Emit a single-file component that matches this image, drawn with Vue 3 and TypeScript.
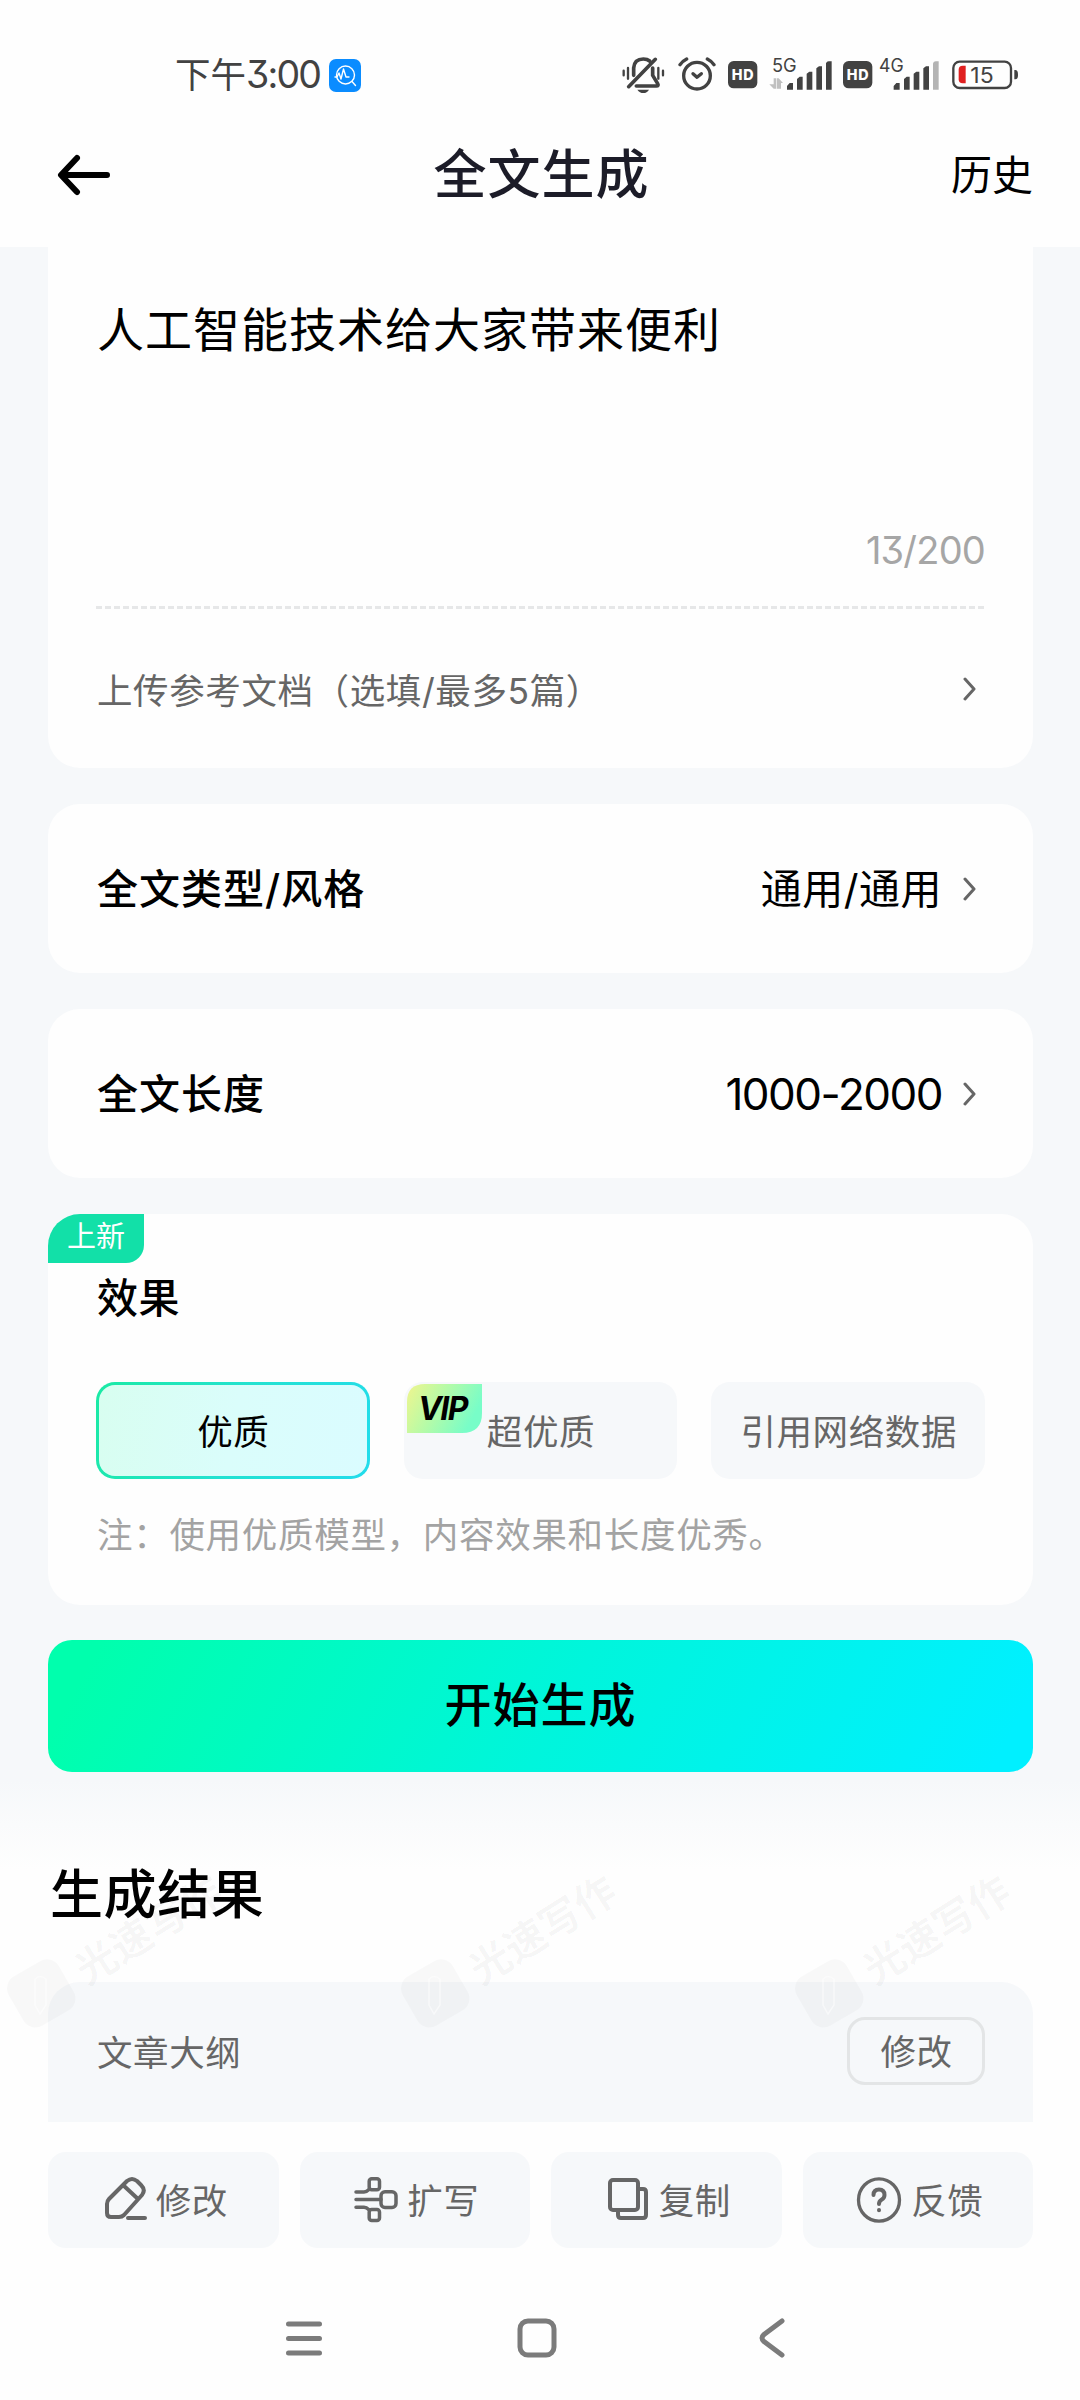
<script setup lang="ts">
import { ref } from 'vue'

interface Mark { x: number }

const topic = ref<string>('人工智能技术给大家带来便利')
const maxLength = 200

const settings: { label: string; value: string }[] = [
  { label: '全文类型/风格', value: '通用/通用' },
  { label: '全文长度', value: '1000-2000' },
]

const options: { name: string; vip: boolean }[] = [
  { name: '优质', vip: false },
  { name: '超优质', vip: true },
  { name: '引用网络数据', vip: false },
]
const selected = ref<string>('优质')

const watermarks: Mark[] = [{ x: 41 }, { x: 435 }, { x: 829 }]
</script>

<template>
  <div class="screen">
    <div class="status">
      <div class="clock">
        <span class="time">下午<span class="digits">3:00</span></span>
        <svg class="app-dot" width="32" height="33" viewBox="0 0 32 33">
          <rect width="32" height="33" rx="7" fill="#0a8cff" />
          <g fill="none" stroke="#fff" stroke-width="1.4" stroke-linecap="round" stroke-linejoin="round">
            <circle cx="16.5" cy="16" r="9" />
            <path d="M23 22.5l3.500 4M6 18h2l2-4 2 6 2.500-10 2.500 8h3" />
          </g>
        </svg>
      </div>
      <div class="indicators">
        <svg width="43" height="38" viewBox="66 48 129 114" fill="none" stroke="#424242" stroke-width="9" stroke-linecap="round">
          <path d="M71 92v14M84 84v32M175 84v32M189 92v14" stroke-width="7" />
          <path d="M101 106V84q2-27 29-27 12 0 19 6M158 84v22l15 25q4 7-4 7h-60" stroke-width="11" />
          <path d="M86 140L166 58" stroke-width="11" />
          <path d="M112 149h35q-6 10-17 10t-18-10z" fill="#424242" stroke="none" />
        </svg>
        <svg class="alarm" width="38" height="38" viewBox="234 48 114 114" fill="none" stroke="#424242" stroke-width="10" stroke-linecap="round" stroke-linejoin="round">
          <circle cx="291" cy="107" r="40" />
          <path d="M279 101l12 11 13-11" />
          <path d="M240 74q8-11 20-17M342 74q-8-11-20-17" />
        </svg>
        <svg class="hd1" width="30" height="38" viewBox="384 48 90 114">
          <rect x="384" y="63" width="88" height="82" rx="17" fill="#424242" />
          <text x="428" y="120" text-anchor="middle" textLength="66" font-size="43" font-weight="800" fill="#fff" class="latin">HD</text>
        </svg>
        <svg class="net5" width="63" height="38" viewBox="507 48 189 114">
          <text x="516" y="97" font-size="56" textLength="74" lengthAdjust="spacingAndGlyphs" fill="#424242" class="latin">5G</text>
          <g fill="#c0c0c0">
            <path d="M520 115h7v31h-7l-13-13h13zM535 146h-6v-31h6l13 14h-6v17z" transform="translate(1 0)" />
          </g>
          <g fill="#424242">
            <path d="M561 149v-11l8-9h10v20zM591 149v-32l8-7h9v39zM620 149v-48l8-6h9v54zM649 149v-64l8-6h9v70zM678 149v-79q2-6 8-6h9v85z" />
          </g>
        </svg>
        <svg class="hd2" width="30" height="38" viewBox="384 48 90 114">
          <rect x="384" y="63" width="88" height="82" rx="17" fill="#424242" />
          <text x="428" y="120" text-anchor="middle" textLength="66" font-size="43" font-weight="800" fill="#fff" class="latin">HD</text>
        </svg>
        <svg class="net4" width="60" height="38" viewBox="836 48 180 114">
          <text x="836" y="97" font-size="56" textLength="74" lengthAdjust="spacingAndGlyphs" fill="#424242" class="latin">4G</text>
          <path fill="#424242" d="M880 149v-11l8-9h10v20zM911 149v-32l8-7h9v39zM940 149v-48l8-6h9v54zM969 149v-64l8-6h9v70z" />
          <path fill="#b4b4b4" d="M998 149v-79q2-6 8-6h9v85z" />
        </svg>
        <svg class="battery" width="67" height="38" viewBox="1055 48 201 114">
          <rect x="1059" y="65" width="173" height="79" rx="19" fill="none" stroke="#424242" stroke-width="7" />
          <path d="M1242 90h3q8 0 8 14t-8 14h-3z" fill="#424242" />
          <path d="M1096 77v53h-9q-12 0-12-12V89q0-12 12-12z" fill="#e02020" />
          <text x="1110" y="128" font-size="65" textLength="70" lengthAdjust="spacingAndGlyphs" fill="#424242" class="latin">15</text>
        </svg>
      </div>
    </div>

    <header class="header">
      <svg width="54" height="42" viewBox="0 0 54 42" fill="none" stroke="#000" stroke-width="6" stroke-linecap="round" stroke-linejoin="round">
        <path d="M20 4L4 21l16 17M5 21h45" />
      </svg>
      <h1>全文生成</h1>
      <span class="history">历史</span>
    </header>

    <main class="form">
      <section class="card topic">
        <p class="topic-text">{{ topic }}</p>
        <p class="counter">{{ topic.length }}/{{ maxLength }}</p>
        <div class="dashes"></div>
        <div class="upload">
          <span>上传参考文档（选填/最多5篇）</span>
          <svg class="chev" width="14" height="24" viewBox="0 0 14 24"><path d="M2 2l9 10-9 10" /></svg>
        </div>
      </section>

      <section v-for="s in settings" :key="s.label" class="card setting">
        <span class="label">{{ s.label }}</span>
        <span class="value" :class="{ numeric: /^\d/.test(s.value) }">{{ s.value }}</span>
        <svg class="chev" width="14" height="24" viewBox="0 0 14 24"><path d="M2 2l9 10-9 10" /></svg>
      </section>

      <section class="card effect">
        <span class="new">上新</span>
        <h2>效果</h2>
        <div class="options">
          <div v-for="o in options" :key="o.name" class="option" :class="{ on: o.name === selected }">
            <svg v-if="o.vip" class="vip" width="76" height="49" viewBox="0 0 76 49">
              <defs>
                <linearGradient id="vipFill" x1="0" y1="0" x2="1" y2=".35">
                  <stop offset="0" stop-color="#f0f58e" />
                  <stop offset=".5" stop-color="#b4fba8" />
                  <stop offset="1" stop-color="#78fdc8" />
                </linearGradient>
              </defs>
              <path d="M18 0H75V29Q75 49 55 49H0V18Q0 0 18 0z" fill="url(#vipFill)" />
              <text x="11" y="36" font-size="32" textLength="51" class="vip-text">VIP</text>
            </svg>
            {{ o.name }}
          </div>
        </div>
        <p class="note">注：使用优质模型，内容效果和长度优秀。</p>
      </section>

      <button class="start">开始生成</button>
    </main>

    <section class="result">
      <h2>生成结果</h2>
      <div class="outline">
        <span>文章大纲</span>
        <button>修改</button>
      </div>
      <div class="tools">
        <div class="tool">
          <svg width="44" height="48" viewBox="0 0 44 48">
            <path d="M4 28q0-3 2-5L24 5q5-4 10 0l4 4q5 5 1 10L21 39q-2 2-5 2H8q-4 0-4-4zM20 9l15 14M25 42h17" />
          </svg>
          <span>修改</span>
        </div>
        <div class="tool">
          <svg width="44" height="46" viewBox="0 0 44 46" class="expand">
            <rect x="15.200" y="1.800" width="10.300" height="11" rx="2.500" />
            <rect x="15.200" y="32.500" width="10.300" height="11" rx="2.500" />
            <rect x="27" y="14.700" width="15" height="15.800" rx="4" />
            <path d="M2 15h8q2.500 0 5-2.500M2 22.600h25M2 30.200h8q2.500 0 5 2.500" />
          </svg>
          <span>扩写</span>
        </div>
        <div class="tool">
          <svg width="44" height="48" viewBox="0 0 44 48">
            <rect x="4" y="4" width="28" height="30" rx="3" />
            <path d="M33 13h4q3 0 3 3v23q0 3-3 3H15q-3 0-3-3v-4" />
          </svg>
          <span>复制</span>
        </div>
        <div class="tool">
          <svg width="46" height="48" viewBox="1 0 46 48">
            <ellipse cx="24" cy="24" rx="20.500" ry="21.200" stroke-width="3.300" />
            <path d="M18.500 19q0-5.500 5.500-5.500t5.500 5.500q0 3-3 4.700-2.500 1.500-2.500 4.300M24 34v.2" />
          </svg>
          <span>反馈</span>
        </div>
      </div>
    </section>

    <nav class="nav">
      <svg width="36" height="40" viewBox="0 0 36 40"><path d="M2.500 6h31M2.500 20.500h31M2.500 35h31" /></svg>
      <svg class="home" width="40" height="40" viewBox="0 0 40 40"><rect x="3" y="3" width="34" height="34" rx="8" /></svg>
      <svg width="26" height="40" viewBox="0 0 26 40"><path d="M23 3L5 16.500q-4 3.500 0 7L23 37" /></svg>
    </nav>

    <svg class="marks" width="1080" height="240" viewBox="0 1830 1080 240">
      <g v-for="m in watermarks" :key="m.x" :transform="`translate(${m.x} 1993)`">
        <g transform="rotate(-30)">
          <rect x="-29" y="-28" width="58" height="57" rx="14" fill="#000" fill-opacity=".024" />
          <path d="M-6-14q5-5 11 0v26l-6 9-5-9z" transform="rotate(30)" fill="none" stroke="#fff" stroke-opacity=".5" stroke-width="1.500" />
        </g>
        <text class="mark-text" transform="translate(46 -7) rotate(-32)">光速写作</text>
      </g>
    </svg>
  </div>
</template>

<style>
body {
  background: #fefefe;
}
</style>

<style scoped>
.screen {
  position: relative;
  width: 1080px;
  height: 2400px;
  overflow: hidden;
  background: #fefefe;
  color: #000;
  font-family: Inter, 'Noto Sans CJK SC', sans-serif;
  font-feature-settings: 'cv09';
  display: flex;
  flex-direction: column;
}
h1, h2, p { margin: 0; font-weight: 400; }
svg { display: block; flex: none; }
.latin { font-family: Inter, sans-serif; }

.status {
  height: 119px;
  box-sizing: border-box;
  padding: 56px 61px 0 175px;
  display: flex;
  justify-content: space-between;
  align-items: flex-start;
}
.clock { display: flex; align-items: center; height: 38px; }
.time { width: 154px; font-size: 35.500px; color: #424242; white-space: nowrap; line-height: 38px; }
.digits { font-size: 37.500px; letter-spacing: -1.800px; }
.indicators { display: flex; }
.alarm { margin-left: 13px; }
.hd1 { margin-left: 12px; }
.net5 { margin-left: 11px; }
.hd2 { margin-left: 11px; }
.net4 { margin-left: 6px; }
.battery { margin-left: 13px; }

.header {
  height: 128px;
  box-sizing: border-box;
  padding: 0 47px 17px 57px;
  display: grid;
  grid-template-columns: 1fr auto 1fr;
  align-items: center;
}
.header h1 { font-size: 53px; font-weight: 500; letter-spacing: 1px; color: #1c1c28; line-height: 60px; margin-right: 7px; }
.history { justify-self: end; font-size: 41px; line-height: 50px; }

.form {
  height: 1533px;
  box-sizing: border-box;
  padding: 0 47px 0 48px;
  background: #f6f8fa;
  display: flex;
  flex-direction: column;
  gap: 36px;
}
.card { background: #fefefe; border-radius: 32px; box-sizing: border-box; }
.topic { height: 521px; border-radius: 0 0 32px 32px; padding: 53px 48px 0; display: flex; flex-direction: column; }
.topic-text { padding-left: 1px; height: 229px; font-size: 47px; letter-spacing: 1px; line-height: 60px; white-space: nowrap; }
.counter { height: 77px; line-height: 42px; font-size: 38px; letter-spacing: -.8px; text-align: right; color: #a6a6a6; }
.dashes { height: 3px; background: repeating-linear-gradient(90deg, #e6e7e8 0 6px, transparent 6px 9px); }
.upload { flex: 1; display: flex; align-items: center; justify-content: space-between; padding: 0 8px 0 1px; font-size: 35.500px; letter-spacing: .6px; color: #666; }
.chev { fill: none; stroke: #666; stroke-width: 3; stroke-linecap: round; stroke-linejoin: round; }
.setting { height: 169px; padding: 0 56px 0 49px; display: flex; align-items: center; }
.label { flex: 1; margin-top: -5px; font-size: 41px; font-weight: 500; letter-spacing: 1px; }
.value { font-size: 41px; margin: -5px 21px 0 0; letter-spacing: .5px; }
.value.numeric { font-size: 44px; letter-spacing: -1.500px; margin-top: 0; }

.effect { position: relative; height: 391px; padding: 59px 48px 0; }
.new {
  position: absolute;
  left: 0;
  top: 0;
  width: 96px;
  height: 49px;
  line-height: 46px;
  text-align: center;
  font-size: 29px;
  color: #fff;
  background: #12e0a8;
  border-radius: 32px 0 18px 0;
}
.effect h2 { padding-left: 1px; height: 50px; line-height: 50px; font-size: 41px; font-weight: 500; letter-spacing: .6px; }
.options { margin-top: 59px; display: flex; gap: 34px; }
.option {
  position: relative;
  flex: 1;
  height: 97px;
  box-sizing: border-box;
  border: 3px solid transparent;
  border-radius: 19px;
  background: #f6f8fa;
  color: #666;
  font-size: 35.500px;
  letter-spacing: .6px;
  line-height: 96px;
  text-align: center;
  text-indent: 1px;
  white-space: nowrap;
}
.on {
  color: #000;
  background: linear-gradient(100deg, #d8fef0, #dafdfb 50%, #dafcff) padding-box,
    linear-gradient(110deg, #1aeaa4, #24e2d0 50%, #22dcec) border-box;
}
.vip { position: absolute; left: 0; top: -1px; }
.vip-text { font-family: Inter, sans-serif; font-weight: 700; font-style: italic; }
.note { margin-top: 33px; padding-left: 1px; line-height: 48px; font-size: 35.500px; letter-spacing: .7px; color: #a3a3a3; }

.start {
  height: 132px;
  margin-top: -1px;
  border: 0;
  border-radius: 24px;
  background: linear-gradient(118deg, #00ffad 5%, #00f5dc 52%, #00f0ff 96%);
  font: 500 47px/128px Inter, 'Noto Sans CJK SC', sans-serif;
  letter-spacing: 1px;
  color: #000;
  padding: 0 0 3px;
}

.result {
  box-sizing: border-box;
  height: 468px;
  padding: 85px 47px 0 48px;
  background: linear-gradient(#f6f8fa, #fefefe 90px);
}
.result h2 { padding-left: 2px; height: 117px; line-height: 60px; font-size: 53px; font-weight: 500; letter-spacing: .6px; }
.outline {
  height: 140px;
  box-sizing: border-box;
  padding: 0 48px 4px 49px;
  border-radius: 32px 32px 0 0;
  background: #f6f8fa;
  display: flex;
  align-items: center;
  justify-content: space-between;
  font-size: 35.500px;
  letter-spacing: .6px;
  color: #666;
}
.outline button {
  width: 138px;
  height: 68px;
  padding: 0 0 3px 1px;
  margin-top: 2px;
  border: 3px solid #e3e5e6;
  border-radius: 18px;
  background: none;
  font: inherit;
  letter-spacing: inherit;
  color: inherit;
}
.tools { margin-top: 30px; display: flex; gap: 21px; }
.tool {
  flex: 1;
  height: 96px;
  box-sizing: border-box;
  padding-left: 4px;
  border-radius: 18px;
  background: #f6f8fa;
  display: flex;
  align-items: center;
  justify-content: center;
  gap: 9px;
  font-size: 35.500px;
  letter-spacing: .6px;
  color: #666;
}
.tool span { margin-top: -3px; }
.tool svg { fill: none; stroke: #666; stroke-width: 4; stroke-linecap: round; stroke-linejoin: round; }
.tool .expand { stroke-width: 3.500; }

.nav { margin-top: 70px; padding: 0 295px 0 286px; display: flex; justify-content: space-between; }
.nav svg { fill: none; stroke: #7b7b7b; stroke-width: 5; stroke-linecap: round; stroke-linejoin: round; }
.home { margin-right: 7px; }

.marks { position: absolute; left: 0; top: 1830px; pointer-events: none; }
.mark-text { font-family: 'Noto Sans CJK SC', sans-serif; font-size: 41px; font-weight: 700; fill: #000; fill-opacity: .035; }
</style>
